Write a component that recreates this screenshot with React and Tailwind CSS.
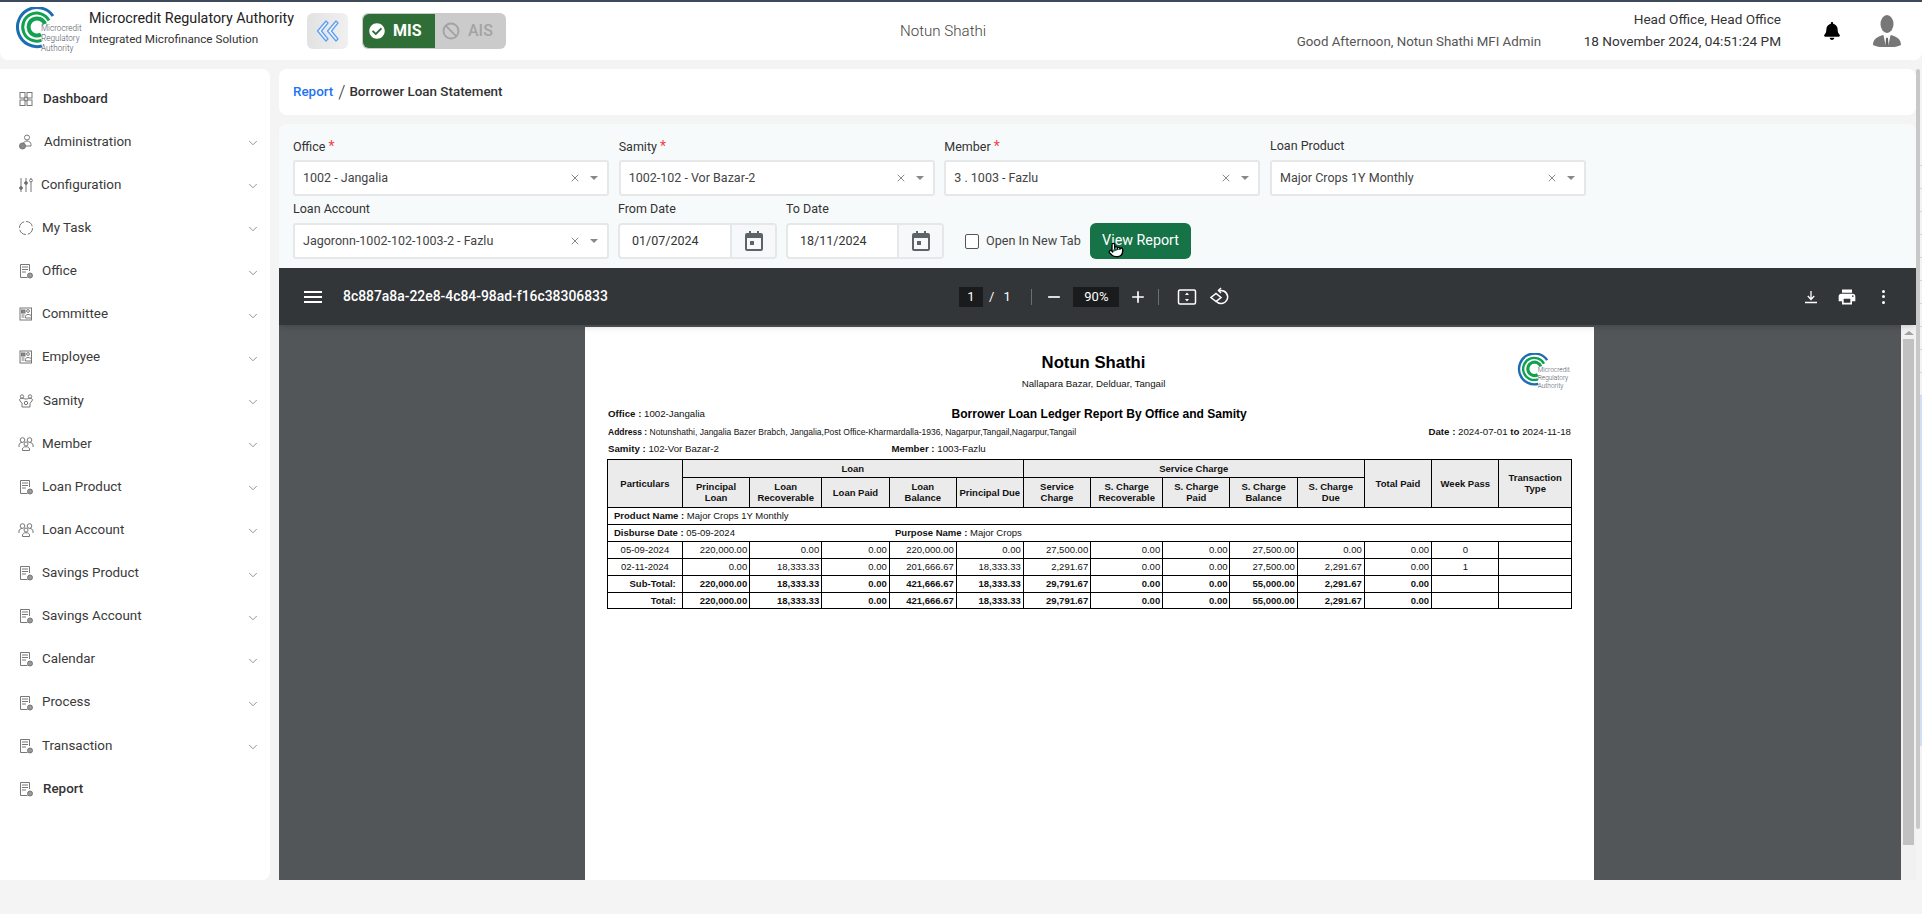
import React from "react";
import { FaBell, FaCheckCircle } from "react-icons/fa";
import { Ban, ChevronDown, X, Pointer } from "lucide-react";

const Logo = ({ className }) => (
  <svg viewBox="0 0 66 48" className={className}>
    <g fill="none" strokeLinecap="butt">
      <path d="M37 9 A19.5 19.5 0 1 0 25.800 39" stroke="#1c6db3" strokeWidth="3" />
      <path d="M33 13.500 A14 14 0 1 0 25.400 33.300" stroke="#12a150" strokeWidth="3" />
      <path d="M29 17 A8.500 8.500 0 1 0 25 27.500" stroke="#12a150" strokeWidth="4" />
    </g>
    <g fontFamily="Roboto, sans-serif" fontSize="8.200" fontWeight="300" fill="#4b5563">
      <text x="25" y="24">Microcredit</text>
      <text x="25" y="34">Regulatory</text>
      <text x="25" y="44">Authority</text>
    </g>
  </svg>
);

const base = { width: 16, height: 16, viewBox: "0 0 16 16", fill: "none", stroke: "#777", strokeWidth: 1 };

const GridIcon = () => (
  <svg {...base}>
    <rect x="2" y="1.500" width="5" height="5.500" />
    <rect x="9" y="1.500" width="5" height="5.500" />
    <rect x="2" y="9" width="5" height="5.500" />
    <rect x="9" y="9" width="5" height="5.500" />
    <circle cx="8" cy="8" r="2" />
  </svg>
);

const AdminIcon = () => (
  <svg {...base}>
    <circle cx="9" cy="3.500" r="2.500" />
    <path d="M5 12v-1.500c0-2 1.800-3.500 4-3.500s4 1.500 4 3.500V12H7" />
    <circle cx="4.500" cy="12" r="3" fill="#888" />
  </svg>
);

const SliderIcon = () => (
  <svg {...base}>
    <path d="M3 1v14M8 1v14M13 1v14" />
    <circle cx="3" cy="11" r="1.400" fill="#666" />
    <circle cx="8" cy="6" r="1.400" fill="#666" />
    <circle cx="13" cy="3.500" r="1.400" fill="#fff" />
  </svg>
);

const TaskIcon = () => (
  <svg {...base}>
    <circle cx="8" cy="8" r="6.500" strokeDasharray="8 2" />
  </svg>
);

const DocIcon = () => (
  <svg {...base}>
    <path d="M11.500 8V1.500h-9v13h7" />
    <path d="M4 4h6M4 6.500h6M4 9h4" />
    <circle cx="12" cy="12.500" r="2.500" fill="#999" />
  </svg>
);

const CardIcon = () => (
  <svg {...base}>
    <rect x="2" y="2" width="11.500" height="12" />
    <rect x="3.500" y="4" width="3.500" height="3" fill="#888" />
    <circle cx="10" cy="5" r="1.400" />
    <path d="M7.500 12v-1.500c0-1.200 1-2 2.500-2s3.500.800 3.500 2V12zM3.500 9h3M3.500 11h3" />
  </svg>
);

const SamityIcon = () => (
  <svg {...base}>
    <circle cx="4" cy="3.500" r="1.700" />
    <circle cx="12" cy="3.500" r="1.700" />
    <path d="M1.500 7c0-1 1-1.700 2.500-1.700S6 6 8 6s2.500-.700 4-.700 2.500.700 2.500 1.700L12 10.500V14H4v-3.500z" />
    <circle cx="8" cy="10" r="1.700" />
  </svg>
);

const PeopleIcon = () => (
  <svg {...base}>
    <circle cx="4.500" cy="4" r="2.300" />
    <circle cx="11.500" cy="4" r="2.300" />
    <path d="M1 11V9c0-1.500 1.500-2.500 3.500-2.500M15 11V9c0-1.500-1.500-2.500-3.500-2.500" />
    <circle cx="8" cy="8" r="2" />
    <path d="M4.500 14.500V13c0-1.300 1.500-2.300 3.500-2.300s3.500 1 3.500 2.300v1.500z" />
  </svg>
);

const menu = [
  { label: "Dashboard", icon: GridIcon, gap: "gap-[9px]", plain: true, text: "font-medium text-[#333]" },
  { label: "Administration", icon: AdminIcon, gap: "gap-[10px]" },
  { label: "Configuration", icon: SliderIcon, gap: "gap-[7px]" },
  { label: "My Task", icon: TaskIcon, gap: "gap-[8px]" },
  { label: "Office", icon: DocIcon, gap: "gap-[8px]" },
  { label: "Committee", icon: CardIcon, gap: "gap-[8px]" },
  { label: "Employee", icon: CardIcon, gap: "gap-[8px]" },
  { label: "Samity", icon: SamityIcon, gap: "gap-[9px]" },
  { label: "Member", icon: PeopleIcon, gap: "gap-[8px]" },
  { label: "Loan Product", icon: DocIcon, gap: "gap-[8px]" },
  { label: "Loan Account", icon: PeopleIcon, gap: "gap-[8px]" },
  { label: "Savings Product", icon: DocIcon, gap: "gap-[8px]" },
  { label: "Savings Account", icon: DocIcon, gap: "gap-[8px]" },
  { label: "Calendar", icon: DocIcon, gap: "gap-[8px]" },
  { label: "Process", icon: DocIcon, gap: "gap-[8px]" },
  { label: "Transaction", icon: DocIcon, gap: "gap-[8px]" },
  { label: "Report", icon: DocIcon, gap: "gap-[9px]", plain: true, text: "font-medium text-[#333]" },
];

const Header = () => (
  <header className="flex h-[60px] items-center rounded-b-lg border-t-2 border-[#3d4a5c] bg-white">
    <div className="ml-[16px] flex w-[291px] items-center gap-[7px]">
      <Logo className="h-[48px] w-[66px] shrink-0" />
      <div className="mb-[7px] whitespace-nowrap">
        <div className="text-[14.300px] leading-[20px] text-[#222]">Microcredit Regulatory Authority</div>
        <div className="mt-[3px] text-[11.700px] leading-[16px] text-[#333]">Integrated Microfinance Solution</div>
      </div>
    </div>
    <button className="flex h-[36px] w-[41px] items-center justify-center rounded-md bg-gradient-to-r from-[#e2e2e2] to-[#f0f0f0]">
      <svg width="24" height="24" viewBox="0 0 24 24" fill="#eef5ff" stroke="#5a9df2" strokeWidth="1.200" strokeLinejoin="round">
        <path d="M10 2 L1.500 12 L10 22 L12 20 L5.500 12 L12 4 Z" />
        <path d="M20 2 L11.500 12 L20 22 L22 20 L15.500 12 L22 4 Z" />
      </svg>
    </button>
    <div className="ml-[14px] flex h-[36px] w-[144px] overflow-hidden rounded-md bg-[#cbcbcb]">
      <div className="m-px mr-0 flex w-[72px] items-center gap-[8px] rounded-l-md bg-[#2f6f37] pl-[6px] text-white">
        <FaCheckCircle className="text-[16px]" />
        <span className="text-[16px] font-bold">MIS</span>
      </div>
      <div className="flex items-center gap-[8px] pl-[7px] text-[#a3a3a3]">
        <Ban size={18} strokeWidth={2.500} />
        <span className="text-[16px] font-medium">AIS</span>
      </div>
    </div>
    <div className="ml-[394px] text-[15.100px] font-light text-[#444]">Notun Shathi</div>
    <div className="ml-auto mt-[21px] whitespace-nowrap text-[13.300px] text-[#555]">Good Afternoon, Notun Shathi MFI Admin</div>
    <div className="-mt-[2px] ml-[42px] w-[198px] whitespace-nowrap text-right text-[13.600px] leading-[20px] text-[#333]">
      <div className="mb-[2px]">Head Office, Head Office</div>
      <div>18 November 2024, 04:51:24 PM</div>
    </div>
    <FaBell className="ml-[42px] text-[18px] text-black" />
    <svg width="28" height="32" viewBox="0 0 28 32" className="ml-[32px] mr-[21px]">
      <ellipse cx="14" cy="9" rx="6.500" ry="9" fill="#777" />
      <path d="M0 30c0-6 4-8 10-10l4 3 4-3c6 2 10 4 10 10-4 2-9 2.500-14 2.500S4 32 0 30z" fill="#777" />
      <path d="M10.500 20l3.500 3 3.500-3-2 10h-3z" fill="#fff" />
      <path d="M13 23h2l.500 7h-3z" fill="#666" />
    </svg>
  </header>
);

const Sidebar = () => (
  <aside className="h-[811px] w-[270px] shrink-0 rounded-r-lg bg-white pt-[8px]">
    {menu.map((m) => (
      <div key={m.label} className="flex h-[43.150px] items-center pl-[18px] pr-[10px]">
        <div className={`flex items-center ${m.gap}`}>
          <m.icon />
          <span className={`text-[13.400px] ${m.text || "text-[#3a3a3a]"}`}>{m.label}</span>
        </div>
        {!m.plain && <ChevronDown size={14} strokeWidth={1.200} className="ml-auto mt-[3px] text-[#666]" />}
      </div>
    ))}
  </aside>
);

const Field = ({ label, required, children }) => (
  <div>
    <div className="mb-[4px] h-[20px] text-[12.500px] leading-[20px] text-[#333]">
      {label}
      {required && <span className="ml-[3px] text-[14px] text-[#ef4444]">*</span>}
    </div>
    {children}
  </div>
);

const Select = ({ value }) => (
  <div className="flex h-[36px] w-[316px] items-center rounded-[3px] border-2 border-[#e5e7e8] bg-white pl-[8px] pr-[9px] text-[12.500px] text-[#444]">
    <span>{value}</span>
    <X size={12} className="ml-auto mr-[9px] text-[#888]" />
    <span className="h-0 w-0 border-x-[4px] border-t-[4px] border-x-transparent border-t-[#888]" />
  </div>
);

const CalendarIcon = () => (
  <svg width="18" height="20" viewBox="0 0 18 20" fill="#5d6468">
    <path d="M4 0h2v2h6V0h2v2h2a2 2 0 0 1 2 2v14a2 2 0 0 1-2 2H2a2 2 0 0 1-2-2V4a2 2 0 0 1 2-2h2zM2 7v11h14V7z" />
    <rect x="5" y="10" width="4" height="4" />
  </svg>
);

const DateInput = ({ value, width, pad }) => (
  <div className={`flex h-[36px] items-center overflow-hidden rounded-[4px] border-2 border-[#e5e7e8] bg-white text-[12.500px] text-[#333] ${width}`}>
    <span className={`flex-1 ${pad}`}>{value}</span>
    <span className="flex h-full w-[45px] items-center justify-center border-l-2 border-[#e5e7e8] bg-[#f6f8f9]">
      <CalendarIcon />
    </span>
  </div>
);

const Filters = () => (
  <section className="h-[144px] rounded-t-lg bg-[#f7fafb] pl-[14px] pt-[12px]">
    <div className="flex gap-[9.670px]">
      <Field label="Office" required><Select value="1002 - Jangalia" /></Field>
      <Field label="Samity" required><Select value="1002-102 - Vor Bazar-2" /></Field>
      <Field label="Member" required><Select value="3 . 1003 - Fazlu" /></Field>
      <Field label="Loan Product"><Select value="Major Crops 1Y Monthly" /></Field>
    </div>
    <div className="mt-[3px] flex items-end gap-[9px]">
      <Field label="Loan Account"><Select value="Jagoronn-1002-102-1003-2 - Fazlu" /></Field>
      <Field label="From Date"><DateInput value="01/07/2024" width="w-[159px]" pad="pl-[12px]" /></Field>
      <Field label="To Date"><DateInput value="18/11/2024" width="w-[158px]" pad="pl-[12px]" /></Field>
      <label className="ml-[12px] flex h-[36px] w-[116px] items-center gap-[7px] whitespace-nowrap text-[12.600px] text-[#444]">
        <span className="h-[15px] w-[14px] shrink-0 rounded-[2px] border border-[#555] bg-white" />
        Open In New Tab
      </label>
      <div className="relative">
        <button className="h-[36px] w-[101px] rounded-md bg-[#157347] text-[14.300px] text-white">View Report</button>
        <Pointer size={16} className="absolute left-[18px] top-[19px] fill-white text-black" />
      </div>
    </div>
  </section>
);

const Sep = () => <span className="block h-[16px] w-px bg-[#6b6f72]" />;

const PdfToolbar = () => (
  <div className="relative z-10 flex h-[57px] shrink-0 items-center bg-[#323639] text-white shadow-md">
    <svg width="24" height="24" viewBox="0 0 24 24" fill="#fff" className="ml-[22px]">
      <path d="M3 18h18v-2H3v2zm0-5h18v-2H3v2zm0-7v2h18V6H3z" />
    </svg>
    <div className="ml-[18px] w-[616px] text-[13.900px] font-medium">8c887a8a-22e8-4c84-98ad-f16c38306833</div>
    <span className="flex h-[20px] w-[24px] items-center justify-center bg-[#191b1c] text-[13px]">1</span>
    <span className="ml-[6px] text-[13px]">/</span>
    <span className="ml-[9px] w-[28px] text-[13px]">1</span>
    <Sep />
    <svg width="20" height="20" viewBox="0 0 24 24" fill="#fff" className="ml-[12px]"><path d="M19 13H5v-2h14v2z" /></svg>
    <span className="ml-[9px] flex h-[20px] w-[46px] items-center justify-center bg-[#191b1c] text-[13px]">90%</span>
    <svg width="20" height="20" viewBox="0 0 24 24" fill="#fff" className="ml-[9px]"><path d="M19 13h-6v6h-2v-6H5v-2h6V5h2v6h6v2z" /></svg>
    <span className="ml-[10px]"><Sep /></span>
    <svg width="20" height="20" viewBox="0 0 20 20" fill="none" stroke="#fff" strokeWidth="1.500" className="ml-[18px]">
      <rect x="1.500" y="3" width="17" height="14" rx="1.500" />
      <path d="M10 5.500l-2 2.500h4zM10 14.500l-2-2.500h4z" fill="#fff" stroke="none" />
    </svg>
    <svg width="20" height="20" viewBox="0 0 20 20" fill="none" stroke="#fff" strokeWidth="1.500" className="ml-[13px]">
      <path d="M7 10.500l-5-4 5-4 5 4z" transform="translate(-1 4)" />
      <path d="M9 3.500h2a6.500 6.500 0 1 1-5 10.500" />
      <path d="M11 1l-2.500 2.500L11 6" />
    </svg>
    <svg width="16" height="16" viewBox="0 0 16 16" fill="none" stroke="#fff" strokeWidth="1.300" className="ml-[573px]">
      <path d="M8 2v8M4.800 7L8 10.500 11.200 7M2 13.500h12" />
    </svg>
    <svg width="20" height="20" viewBox="0 0 24 24" fill="#fff" className="ml-[18px]">
      <path d="M19 8H5c-1.660 0-3 1.340-3 3v6h4v4h12v-4h4v-6c0-1.660-1.340-3-3-3zm-3 11H8v-5h8v5zm3-7c-.550 0-1-.450-1-1s.450-1 1-1 1 .450 1 1-.450 1-1 1zm-1-9H6v4h12V3z" />
    </svg>
    <div className="ml-[25px] flex flex-col gap-[2.500px]">
      <span className="h-[3px] w-[3px] rounded-full bg-white" />
      <span className="h-[3px] w-[3px] rounded-full bg-white" />
      <span className="h-[3px] w-[3px] rounded-full bg-white" />
    </div>
  </div>
);

const colWidths = [
  "w-[74.800px]", "w-[67.400px]", "w-[72px]", "w-[67.600px]", "w-[67px]", "w-[67px]", "w-[67.400px]",
  "w-[72px]", "w-[67.300px]", "w-[67.300px]", "w-[67px]", "w-[67.400px]", "w-[67.300px]", "w-[72.500px]",
];

const rows = [
  ["05-09-2024", "220,000.00", "0.00", "0.00", "220,000.00", "0.00", "27,500.00", "0.00", "0.00", "27,500.00", "0.00", "0.00", "0", ""],
  ["02-11-2024", "0.00", "18,333.33", "0.00", "201,666.67", "18,333.33", "2,291.67", "0.00", "0.00", "27,500.00", "2,291.67", "0.00", "1", ""],
];
const totals = [
  ["Sub-Total:", "220,000.00", "18,333.33", "0.00", "421,666.67", "18,333.33", "29,791.67", "0.00", "0.00", "55,000.00", "2,291.67", "0.00", "", ""],
  ["Total:", "220,000.00", "18,333.33", "0.00", "421,666.67", "18,333.33", "29,791.67", "0.00", "0.00", "55,000.00", "2,291.67", "0.00", "", ""],
];

const th = "border border-black bg-[#ebebeb] px-[1px] text-center font-bold leading-[11px]";
const td = "border border-black px-[2px] leading-[11px]";

const LedgerTable = () => (
  <table className="mt-[4px] w-[964px] table-fixed border-collapse border border-black text-[9.500px] text-[#111]">
    <colgroup>
      {colWidths.map((w, i) => <col key={i} className={w} />)}
    </colgroup>
    <thead>
      <tr className="h-[17.700px]">
        <th rowSpan={2} className={th}>Particulars</th>
        <th colSpan={5} className={th}>Loan</th>
        <th colSpan={5} className={th}>Service Charge</th>
        <th rowSpan={2} className={th}>Total Paid</th>
        <th rowSpan={2} className={th}>Week Pass</th>
        <th rowSpan={2} className={th}>Transaction<br />Type</th>
      </tr>
      <tr className="h-[30.300px]">
        <th className={th}>Principal<br />Loan</th>
        <th className={th}>Loan<br />Recoverable</th>
        <th className={th}>Loan Paid</th>
        <th className={th}>Loan<br />Balance</th>
        <th className={th}>Principal Due</th>
        <th className={th}>Service<br />Charge</th>
        <th className={th}>S. Charge<br />Recoverable</th>
        <th className={th}>S. Charge<br />Paid</th>
        <th className={th}>S. Charge<br />Balance</th>
        <th className={th}>S. Charge<br />Due</th>
      </tr>
    </thead>
    <tbody>
      <tr className="h-[17px]">
        <td colSpan={14} className={`${td} pl-[6px]`}><b>Product Name :</b> Major Crops 1Y Monthly</td>
      </tr>
      <tr className="h-[17px]">
        <td colSpan={14} className={`${td} pl-[6px]`}>
          <span className="inline-block w-[281px]"><b>Disburse Date :</b> 05-09-2024</span>
          <b>Purpose Name :</b> Major Crops
        </td>
      </tr>
      {rows.map((r) => (
        <tr key={r[0]} className="h-[17px]">
          {r.map((c, i) => (
            <td key={i} className={`${td} ${i === 0 || i === 12 ? "text-center" : "text-right"}`}>{c}</td>
          ))}
        </tr>
      ))}
      {totals.map((r) => (
        <tr key={r[0]} className="h-[16.700px] font-bold">
          {r.map((c, i) => (
            <td key={i} className={`${td} text-right ${i === 0 ? "pr-[6px]" : ""}`}>{c}</td>
          ))}
        </tr>
      ))}
    </tbody>
  </table>
);

const PdfPage = () => (
  <div className="mr-[2px] mt-[2px] h-[560px] w-[1009px] bg-white px-[22.500px] pt-[26px] text-[#111] [font-family:'Liberation_Sans',Arial,sans-serif]">
    <div className="grid h-[37px] grid-cols-[1fr_auto_1fr]">
      <div />
      <div className="ml-[9px] text-center">
        <div className="text-[16.700px] font-bold leading-[20px] text-black">Notun Shathi</div>
        <div className="mt-[5px] text-[9.700px] leading-[12px]">Nallapara Bazar, Delduar, Tangail</div>
      </div>
      <div className="flex justify-end">
        <Logo className="h-[38px] w-[54px]" />
      </div>
    </div>
    <div className="mt-[17px] grid grid-cols-[343.500px_auto] pl-[1px] text-[9.700px] leading-[14px]">
      <div><b>Office :</b> 1002-Jangalia</div>
      <div className="text-[12.050px] font-bold text-black">Borrower Loan Ledger Report By Office and Samity</div>
    </div>
    <div className="mt-[5px] flex justify-between pl-[1px] leading-[12px]">
      <div className="text-[8.500px]"><b>Address :</b> Notunshathi, Jangalia Bazer Brabch, Jangalia,Post Office-Kharmardalla-1936, Nagarpur,Tangail,Nagarpur,Tangail</div>
      <div className="text-[9.700px]"><b>Date :</b> 2024-07-01 <b>to</b> 2024-11-18</div>
    </div>
    <div className="mt-[5px] flex pl-[1px] text-[9.700px] leading-[12px]">
      <div className="w-[283.500px]"><b>Samity :</b> 102-Vor Bazar-2</div>
      <div><b>Member :</b> 1003-Fazlu</div>
    </div>
    <LedgerTable />
  </div>
);

const PdfViewer = () => (
  <section className="flex h-[612px] flex-col overflow-hidden bg-[#525659]">
    <PdfToolbar />
    <div className="flex min-h-0 flex-1">
      <div className="flex flex-1 justify-center overflow-hidden">
        <PdfPage />
      </div>
      <div className="flex w-[15px] flex-col items-center bg-[#f1f1f1]">
        <span className="mt-[6px] h-0 w-0 border-x-[5px] border-b-[4px] border-x-transparent border-b-[#a0a0a0]" />
        <span className="mt-[4px] h-[506px] w-[11px] bg-[#c1c1c1]" />
      </div>
    </div>
  </section>
);

const PageEdge = () => (
  <div className="relative h-[821px] w-[6px] pt-[74px]">
    <div className="absolute left-0 top-0 h-[760px] w-[4px] rounded-full bg-[#c8c8c8]" />
    {[0, 1, 2, 3, 4, 5, 6, 7, 8, 9, 10].map((i) => (
      <div key={i} className="ml-auto h-[23px] w-[2px] border-b border-[#d5d5d5]" />
    ))}
    <div className="ml-auto h-[350px] w-[2px] bg-[#d0dff5]" />
  </div>
);

export default function App() {
  return (
    <div className="h-[914px] w-full overflow-hidden bg-[#f4f4f4] [font-family:Roboto,sans-serif]">
      <Header />
      <div className="flex pt-[9px]">
        <Sidebar />
        <main className="ml-[9px] flex w-[1637px] flex-col">
          <div className="flex h-[46px] items-center rounded-lg bg-white pl-[14px] text-[13.400px]">
            <span className="font-medium text-[#1d74f5]">Report</span>
            <span className="ml-[5px] mr-[4px] text-[18px] font-light leading-none text-[#333]">/</span>
            <span className="font-medium text-[#333]">Borrower Loan Statement</span>
          </div>
          <div className="mt-[9px]">
            <Filters />
            <PdfViewer />
          </div>
        </main>
        <PageEdge />
      </div>
    </div>
  );
}
